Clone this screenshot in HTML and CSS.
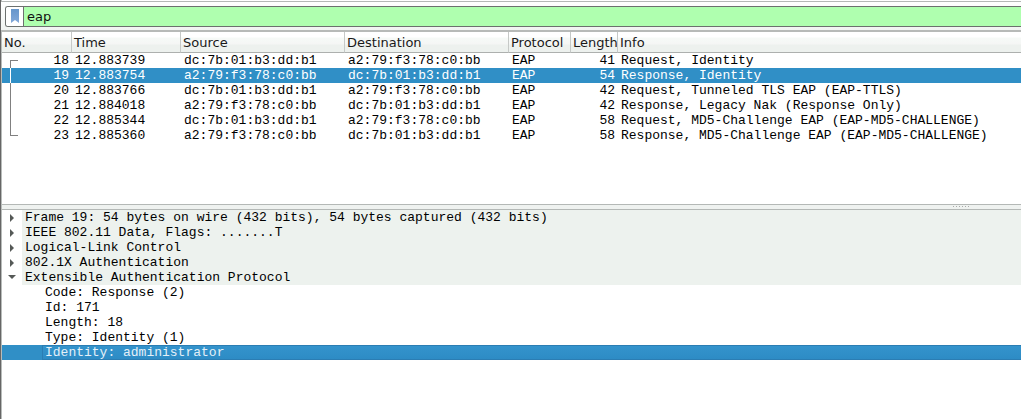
FILE: index.html
```
<!DOCTYPE html>
<html lang="en">
<head>
<meta charset="utf-8">
<title>eap - packet capture</title>
<link rel="stylesheet" href="styles.css">
</head>
<body>
<main class="window">
  <form class="filter-bar">
    <div class="filter-box">
      <button class="bookmark" type="button" aria-label="Filter bookmarks">
        <svg width="8" height="14" viewBox="0 0 8 14"><defs><linearGradient id="bm" x1="0" y1="0" x2="0" y2="1"><stop offset="0" stop-color="#6695cb"/><stop offset="1" stop-color="#83a9d9"/></linearGradient></defs><path d="M0 0H8V14L4 11L0 14Z" fill="url(#bm)"/></svg>
      </button>
      <input class="filter-input" type="text" value="eap" aria-label="Display filter" spellcheck="false">
    </div>
  </form>

  <section class="packet-pane">
    <table class="packets">
      <colgroup><col class="c-no"><col class="c-time"><col class="c-addr"><col class="c-addr"><col class="c-proto"><col class="c-len"><col></colgroup>
      <thead>
        <tr><th>No.</th><th>Time</th><th>Source</th><th>Destination</th><th>Protocol</th><th>Length</th><th>Info</th></tr>
      </thead>
      <tbody>
        <tr><td><div class="no"><i class="link first"></i>18</div></td><td>12.883739</td><td>dc:7b:01:b3:dd:b1</td><td>a2:79:f3:78:c0:bb</td><td>EAP</td><td class="num">41</td><td>Request, Identity</td></tr>
        <tr class="selected"><td><div class="no"><i class="link"></i>19</div></td><td>12.883754</td><td>a2:79:f3:78:c0:bb</td><td>dc:7b:01:b3:dd:b1</td><td>EAP</td><td class="num">54</td><td>Response, Identity</td></tr>
        <tr><td><div class="no"><i class="link"></i>20</div></td><td>12.883766</td><td>dc:7b:01:b3:dd:b1</td><td>a2:79:f3:78:c0:bb</td><td>EAP</td><td class="num">42</td><td>Request, Tunneled TLS EAP (EAP-TTLS)</td></tr>
        <tr><td><div class="no"><i class="link"></i>21</div></td><td>12.884018</td><td>a2:79:f3:78:c0:bb</td><td>dc:7b:01:b3:dd:b1</td><td>EAP</td><td class="num">42</td><td>Response, Legacy Nak (Response Only)</td></tr>
        <tr><td><div class="no"><i class="link"></i>22</div></td><td>12.885344</td><td>dc:7b:01:b3:dd:b1</td><td>a2:79:f3:78:c0:bb</td><td>EAP</td><td class="num">58</td><td>Request, MD5-Challenge EAP (EAP-MD5-CHALLENGE)</td></tr>
        <tr><td><div class="no"><i class="link last"></i>23</div></td><td>12.885360</td><td>a2:79:f3:78:c0:bb</td><td>dc:7b:01:b3:dd:b1</td><td>EAP</td><td class="num">58</td><td>Response, MD5-Challenge EAP (EAP-MD5-CHALLENGE)</td></tr>
      </tbody>
    </table>
  </section>

  <div class="splitter" role="separator"><span class="grip"><i></i><i></i><i></i><i></i><i></i><i></i></span></div>

  <section class="detail-pane">
    <ul class="tree">
      <li class="node"><button class="toggle" type="button" aria-label="Expand"><svg width="6" height="9" viewBox="0 0 6 9"><path d="M1 1L5 5L1 9Z"/></svg></button><span class="label">Frame 19: 54 bytes on wire (432 bits), 54 bytes captured (432 bits)</span></li>
      <li class="node"><button class="toggle" type="button" aria-label="Expand"><svg width="6" height="9" viewBox="0 0 6 9"><path d="M1 1L5 5L1 9Z"/></svg></button><span class="label">IEEE 802.11 Data, Flags: .......T</span></li>
      <li class="node"><button class="toggle" type="button" aria-label="Expand"><svg width="6" height="9" viewBox="0 0 6 9"><path d="M1 1L5 5L1 9Z"/></svg></button><span class="label">Logical-Link Control</span></li>
      <li class="node"><button class="toggle" type="button" aria-label="Expand"><svg width="6" height="9" viewBox="0 0 6 9"><path d="M1 1L5 5L1 9Z"/></svg></button><span class="label">802.1X Authentication</span></li>
      <li>
        <div class="node"><button class="toggle" type="button" aria-label="Collapse"><svg width="8" height="5" viewBox="0 0 8 5"><path d="M0 0H8L4 4Z"/></svg></button><span class="label">Extensible Authentication Protocol</span></div>
        <ul class="tree">
          <li class="field"><span>Code: Response (2)</span></li>
          <li class="field"><span>Id: 171</span></li>
          <li class="field"><span>Length: 18</span></li>
          <li class="field"><span>Type: Identity (1)</span></li>
          <li class="field current"><span>Identity: administrator</span></li>
        </ul>
      </li>
    </ul>
  </section>
</main>
</body>
</html>
```
FILE: styles.css
```
* { box-sizing: border-box; }

body {
  margin: 0;
  background: #fff;
  color: #000;
  font: 13px/15px "Liberation Mono", monospace;
}

.window {
  display: flex;
  flex-direction: column;
  min-height: 100vh;
  border-left: 1px solid #666;
  box-shadow: inset 1px 0 #b8bcba;
  overflow: hidden;
}

.filter-bar {
  padding: 4px 0 3px 4px;
  border-top: 1px solid #b4b8b6;
  margin-top: 1px;
  background: linear-gradient(#fff, #f1f4f2);
}

.filter-box {
  display: flex;
  height: 21px;
  border: 1px solid #6c706e;
  border-right: 0;
  border-radius: 3px 0 0 3px;
  overflow: hidden;
}

.bookmark {
  display: flex;
  align-items: flex-start;
  justify-content: center;
  width: 18px;
  padding: 2px 0 0;
  border: 0;
  border-right: 1px solid #6c706e;
  background: #fff;
}

.filter-input {
  flex: 1;
  min-width: 0;
  padding: 0 3px;
  border: 0;
  outline: 0;
  background: #afffaf;
  color: #111;
  font: 13px/19px "DejaVu Sans", sans-serif;
}

.packet-pane {
  min-height: 175px;
  margin-left: 1px;
  border-top: 2px solid #b7bab8;
  border-bottom: 1px solid #b4b8b6;
  background: #fff;
}

.packets {
  width: 100%;
  table-layout: fixed;
  border-collapse: separate;
  border-spacing: 0;
}

.c-no { width: 70px; }
.c-time { width: 109px; }
.c-addr { width: 164px; }
.c-proto { width: 62px; }
.c-len { width: 47px; }

.packets th {
  height: 21px;
  padding: 2px 0 0 2px;
  border-right: 1px solid #c6c9c7;
  border-bottom: 1px solid #adb0ae;
  background: linear-gradient(#fff 5px, #f6faf7 6px, #f5f6f5 12px, #edf1ee 13px);
  color: #1a1a1a;
  font: 13px/18px "DejaVu Sans", sans-serif;
  text-align: left;
  white-space: nowrap;
  overflow: hidden;
}

.packets th:last-child { border-right: 0; }

.packets td {
  height: 15px;
  padding: 0 3px;
  white-space: nowrap;
  overflow: hidden;
}

.packets .num { text-align: right; }

.packets td:first-child { padding-left: 8px; }

.selected { background: #308fc6; color: #fff; }

.no {
  display: flex;
  justify-content: space-between;
}

.link {
  width: 8px;
  height: 15px;
  border-left: 1px solid #808080;
}

.link.first {
  height: 8px;
  margin-top: 7px;
  border-top: 1px solid #808080;
}

.link.last {
  height: 8px;
  border-bottom: 1px solid #808080;
}

.selected .link { border-color: #fff; }

.splitter {
  display: flex;
  justify-content: flex-end;
  height: 4px;
  margin-left: 1px;
  padding: 1px 52px 0 0;
  background: #eff2f0;
}

.grip { display: flex; gap: 2px; }

.grip i {
  width: 1px;
  height: 1px;
  background: #aaa;
}

.detail-pane {
  flex: 1;
  margin-left: 1px;
  border-top: 1px solid #b4b8b6;
}

.tree {
  margin: 0;
  padding: 0;
  list-style: none;
}

.node { display: flex; }

.toggle {
  display: flex;
  align-items: center;
  justify-content: center;
  width: 20px;
  height: 15px;
  padding: 0;
  border: 0;
  background: none;
}

.toggle path { fill: #555957; }

.label {
  flex: 1;
  padding-left: 3px;
  background: #edf2ee;
  white-space: nowrap;
}

.field {
  display: flex;
  padding-left: 40px;
  white-space: nowrap;
}

.field span {
  flex: 1;
  padding-left: 3px;
}

.current { background: #308fc6; color: #e4f0f8; }

.current span {
  background: linear-gradient(#3494cd, #2d8bc4);
  box-shadow: inset 1px 1px #2b7db3, inset 0 -1px #2b7db3;
}
```
